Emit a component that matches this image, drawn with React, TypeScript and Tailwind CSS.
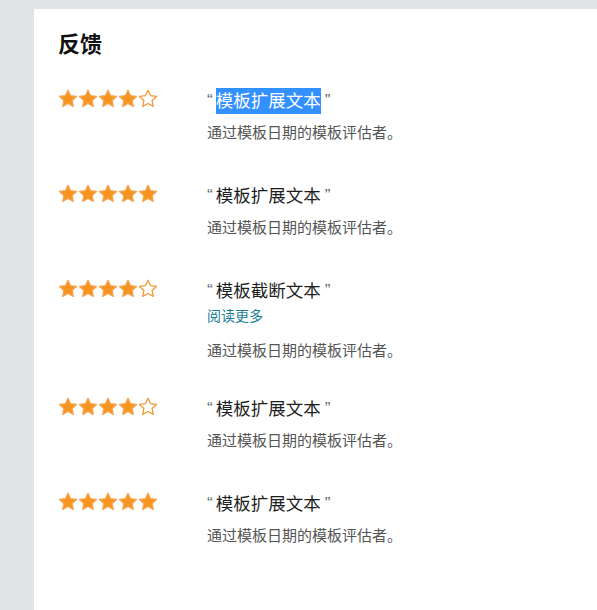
import React from 'react';

type Review = {
  rating: number;
  text: string;
  truncated?: boolean;
};

const reviews: Review[] = [
  { rating: 4, text: '模板扩展文本' },
  { rating: 5, text: '模板扩展文本' },
  { rating: 4, text: '模板截断文本', truncated: true },
  { rating: 4, text: '模板扩展文本' },
  { rating: 5, text: '模板扩展文本' },
];

const FONT = '"Liberation Sans", "Noto Sans CJK SC", sans-serif';

function Star({ filled }: { filled: boolean }) {
  return (
    <svg width="20" height="19" viewBox="0 0 24 23" className="block">
      <path
        d="M12 1.5l3.1 6.6 7.2.9-5.3 5 1.4 7.1L12 17.6l-6.4 3.5 1.4-7.1-5.3-5 7.2-.9z"
        fill={filled ? '#f7941d' : '#ffffff'}
        stroke={filled ? '#f5a552' : '#f39a3a'}
        strokeWidth="1.6"
        strokeLinejoin="round"
      />
    </svg>
  );
}

function Stars({ rating }: { rating: number }) {
  return (
    <div className="flex">
      {[1, 2, 3, 4, 5].map((i) => (
        <Star key={i} filled={i <= rating} />
      ))}
    </div>
  );
}

export default function App() {
  return (
    <div className="min-h-[610px] bg-[#e1e4e5] pl-[34px] pt-[9px]" style={{ fontFamily: FONT }}>
      <div className="min-h-[601px] bg-white pl-[24px] pt-[21px]">
        <h2 className="text-[22px] font-bold leading-[30px] text-[#111]">反馈</h2>

        <div className="mt-[28px] flex flex-col">
          {reviews.map((r, idx) => (
            <div key={idx} className={`flex ${r.truncated ? 'pb-[35px]' : 'pb-[40px]'}`}>
              <div className="w-[149px] shrink-0 pt-[1px]">
                <Stars rating={r.rating} />
              </div>
              <div>
                <p className="flex items-start text-[17.5px] leading-[26px] text-[#1e1e1e]">
                  <span className="mr-[3px] text-[17px] text-[#666]">“</span>
                  {idx === 0 ? (
                    <span className="bg-[#3390ff] text-white">{r.text}</span>
                  ) : (
                    <span>{r.text}</span>
                  )}
                  <span className="ml-[4px] text-[17px] text-[#666]">”</span>
                </p>
                {r.truncated && (
                  <a href="#" className="block pb-[4px] text-[14px] leading-[24px] text-[#1a7d96]">
                    阅读更多
                  </a>
                )}
                <p className="mt-[9px] text-[15px] leading-[20px] text-[#555]">
                  通过模板日期的模板评估者。
                </p>
              </div>
            </div>
          ))}
        </div>
      </div>
    </div>
  );
}
